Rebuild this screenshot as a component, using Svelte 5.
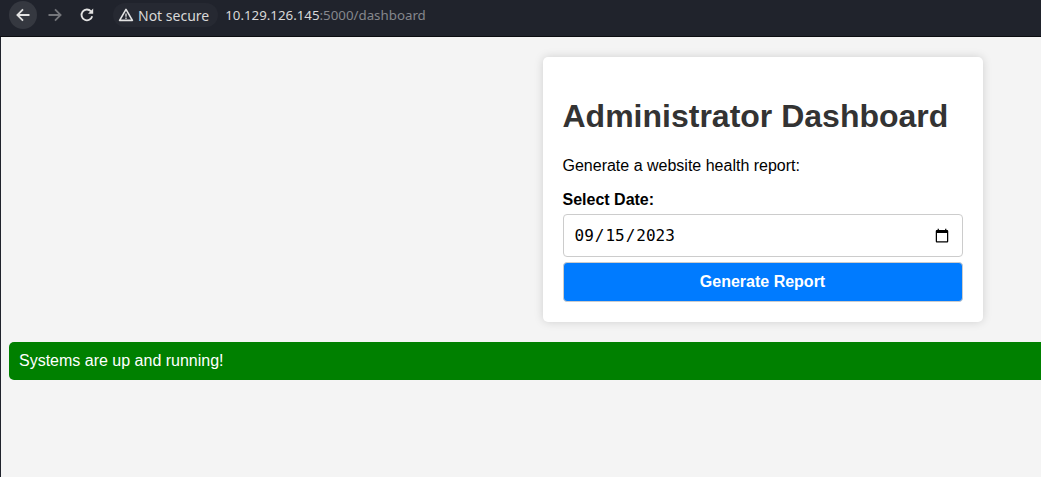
<script lang="ts">
  let reportDate = $state('2023-09-15');
</script>

<div class="window">
  <header class="toolbar">
    <button class="nav active" aria-label="Back">
      <svg viewBox="0 0 16 16" width="16" height="16"><path d="M14.5 8H2.6M8 2.4 2.4 8 8 13.6" fill="none" stroke="#e3e3e3" stroke-width="1.8"/></svg>
    </button>
    <button class="nav" aria-label="Forward">
      <svg viewBox="0 0 16 16" width="16" height="16"><path d="M1.5 8h11.9M8 2.4 13.6 8 8 13.6" fill="none" stroke="#74767b" stroke-width="1.8"/></svg>
    </button>
    <button class="nav" aria-label="Reload">
      <svg viewBox="0 0 16 16" width="16" height="16"><path d="M13.2 9.2A5.4 5.4 0 1 1 12 4.3" fill="none" stroke="#e3e3e3" stroke-width="1.8"/><path d="M14.2 1.6v5.2H9z" fill="#e3e3e3"/></svg>
    </button>
    <div class="omnibox">
      <span class="chip">
        <svg viewBox="0 0 16 16" width="16" height="16"><path d="M8 2.4 14.4 13.4H1.6z" fill="none" stroke="#e3e3e3" stroke-width="1.6" stroke-linejoin="round"/><path d="M8 6.5v3.2M8 10.6v1.4" stroke="#e3e3e3" stroke-width="1.3"/></svg>
        Not secure
      </span>
      <span class="url">10.129.126.145<span class="dim">:5000/dashboard</span></span>
    </div>
  </header>

  <main class="page">
    <section class="card">
      <h1>Administrator Dashboard</h1>
      <p>Generate a website health report:</p>
      <form onsubmit={(e) => e.preventDefault()}>
        <label for="date">Select Date:</label>
        <input id="date" type="date" bind:value={reportDate} />
        <button class="submit" type="submit">Generate Report</button>
      </form>
    </section>
    <div class="alert">Systems are up and running!</div>
  </main>
</div>

<style>
  :global(body) {
    margin: 0;
    background: #f4f4f4;
    overflow: hidden;
  }

  .window {
    width: 1041px;
    height: 477px;
    overflow: hidden;
    font-family: "Liberation Sans", Arial, sans-serif;
  }

  .toolbar {
    display: flex;
    align-items: flex-start;
    height: 35px;
    padding: 1px 0 0 9px;
    background: #20232c;
    border-bottom: 1px solid #0c0d11;
    box-sizing: content-box;
  }

  .nav {
    display: flex;
    align-items: center;
    justify-content: center;
    width: 28px;
    height: 28px;
    margin-right: 4px;
    padding: 0;
    border: none;
    border-radius: 50%;
    background: none;
  }

  .nav.active {
    background: #353840;
  }

  .omnibox {
    display: flex;
    align-items: center;
    height: 28px;
    margin-left: 8px;
    font-family: "Noto Sans", sans-serif;
    font-size: 14px;
    color: #d8d8d8;
  }

  .chip {
    display: flex;
    align-items: center;
    gap: 4px;
    height: 24px;
    padding: 0 9px 0 5px;
    border-radius: 12px;
    background: #262932;
  }

  .url {
    margin-left: 7px;
    font-size: 13.3px;
  }

  .dim {
    color: #85878c;
  }

  .page {
    width: 1516px;
    height: 440px;
    box-sizing: border-box;
    padding: 20px 0 0 8px;
    border-left: 1px solid #20232c;
    color: #000;
  }

  .card {
    width: 440px;
    box-sizing: border-box;
    margin: 0 auto;
    padding: 20px;
    background: #fff;
    border-radius: 5px;
    box-shadow: 0 0 10px rgba(0, 0, 0, 0.15);
  }

  h1 {
    margin: 21px 0 22px;
    font-size: 32px;
    line-height: 37px;
    color: #333;
  }

  p {
    margin: 16px 0;
    font-size: 16px;
    line-height: 18px;
  }

  form {
    display: flex;
    flex-direction: column;
  }

  label {
    margin-bottom: 5px;
    font-size: 16px;
    font-weight: bold;
    line-height: 18px;
  }

  input {
    height: 43px;
    box-sizing: border-box;
    padding: 10px;
    margin-bottom: 5px;
    font-family: "DejaVu Sans Mono", monospace;
    font-size: 16px;
    background: #fff;
    border: 1px solid #ccc;
    border-radius: 4px;
  }

  .submit {
    height: 40px;
    padding: 0;
    font-family: inherit;
    font-size: 16px;
    font-weight: bold;
    color: #fff;
    background: #007bff;
    border: 1px solid #ccc;
    border-radius: 4px;
  }

  .alert {
    margin-top: 20px;
    padding: 10px;
    font-size: 16px;
    line-height: 18px;
    color: #fff;
    background: #008000;
    border-radius: 5px;
  }
</style>
